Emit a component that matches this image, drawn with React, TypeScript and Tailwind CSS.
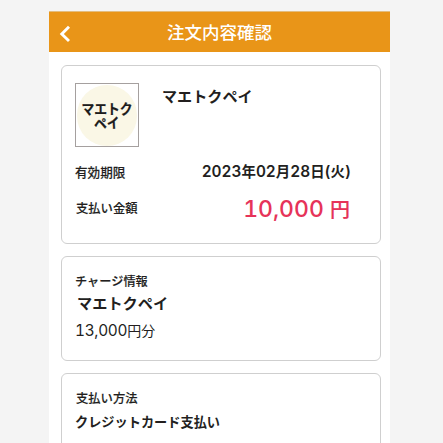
const jp = "font-['Noto_Sans_CJK_JP',sans-serif]";
const mixed = "font-['Inter','Noto_Sans_CJK_JP',sans-serif] tabular-nums";
const label = 'font-medium [-webkit-text-stroke:0.15px_currentColor]';

function Logo() {
  return (
    <div className="flex h-16 w-16 shrink-0 items-center justify-center border border-[#a5a09f] bg-white">
      <div className="flex h-[61px] w-[60px] flex-col items-center justify-center rounded-full bg-[#faf7e6] text-[12.8px] font-bold text-[#1c1c1c] [-webkit-text-stroke:0.2px_currentColor]">
        <span className="h-[15px] scale-y-110 leading-[15px] whitespace-nowrap">マエトク</span>
        <span className="h-[15px] -rotate-3 scale-y-110 leading-[15px] whitespace-nowrap">ペイ</span>
      </div>
    </div>
  );
}

export default function App() {
  return (
    <div className={`h-[443px] w-[443px] overflow-hidden bg-[#f4f4f4] pt-[11px] pl-[49px] text-[#231f1e] whitespace-nowrap ${jp}`}>
      <main className="h-[460px] w-[341px] bg-white">
        <header className="flex h-[41px] items-center border-t border-[#e3bd7f] bg-[#e99518] text-white">
          <svg className="ml-[10px] mt-[4px] h-[18px] w-3 shrink-0" viewBox="0 0 12 18" fill="none" stroke="currentColor" strokeWidth="2.9">
            <path d="M10 1.8 2.8 9l7.2 7" />
          </svg>
          <h1 className="ml-[96px] text-[17.5px] leading-[26px] font-medium">注文内容確認</h1>
        </header>
        <div className="flex flex-col gap-3 px-3 pt-[13px]">
          <section className="h-[179px] w-80 rounded-md border border-[#cfcfcf] pt-[17px] pr-[30px] pl-[13px]">
            <div className="flex">
              <Logo />
              <h2 className="ml-[23px] text-[15.1px] leading-6 font-bold">マエトクペイ</h2>
            </div>
            <div className="mt-[15px] flex items-center justify-between">
              <span className={`text-[12.6px] leading-5 ${label}`}>有効期限</span>
              <span className={`-mr-px text-[15.4px] leading-5 font-semibold ${mixed}`}>
                2023<span className="text-[14.4px]">年</span>02<span className="text-[14.4px]">月</span>28<span className="text-[14.4px]">日</span>(<span className="text-[14.4px]">火</span>)
              </span>
            </div>
            <div className="mt-[15px] flex items-start justify-between">
              <span className={`-mt-px ml-px text-[12.3px] leading-6 ${label}`}>支払い金額</span>
              <span className={`text-[23px] leading-6 font-medium text-[#e63359] ${mixed}`}>
                10,000 <span className="text-[20px] [-webkit-text-stroke:0.2px_currentColor]">円</span>
              </span>
            </div>
          </section>
          <section className="h-[105px] w-80 rounded-md border border-[#cfcfcf] pt-[15px] pl-[13px]">
            <p className={`text-[12.2px] leading-[18px] ${label}`}>チャージ情報</p>
            <p className="ml-[2px] text-[15.2px] leading-6 font-bold">マエトクペイ</p>
            <p className={`mt-[7px] text-[15.4px] leading-5 tracking-[-0.3px] ${mixed}`}>
              13,000<span className="text-[14px] tracking-normal">円分</span>
            </p>
          </section>
          <section className="h-[105px] w-80 rounded-md border border-[#cfcfcf] pt-[15px] pl-[13px]">
            <p className={`ml-px text-[12.3px] leading-[18px] ${label}`}>支払い方法</p>
            <p className="mt-[3px] text-[13.2px] leading-6 font-bold">クレジットカード支払い</p>
          </section>
        </div>
      </main>
    </div>
  );
}
